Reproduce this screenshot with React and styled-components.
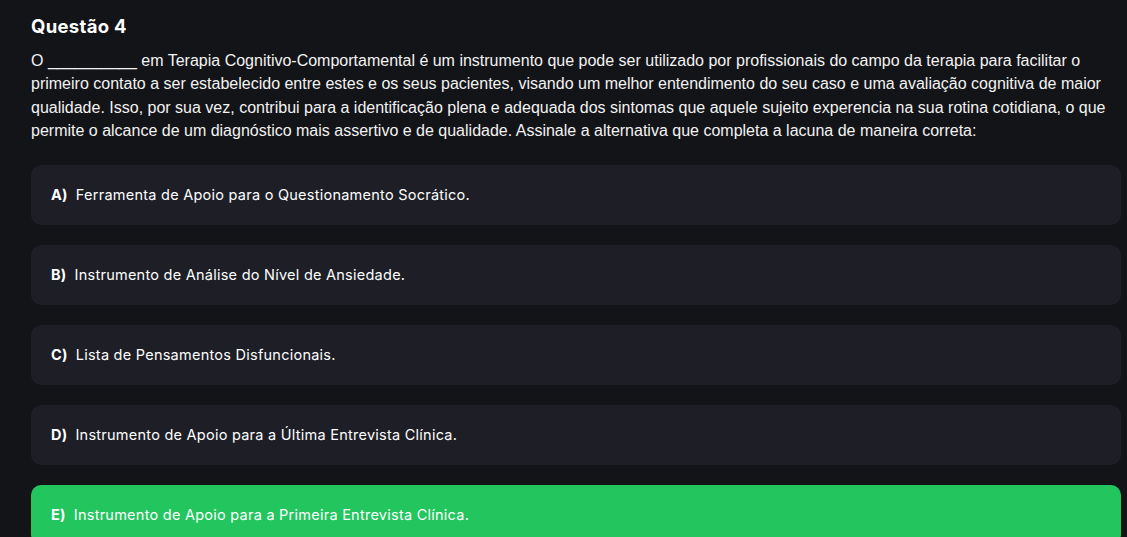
import styled, { createGlobalStyle } from "styled-components";

const GlobalStyle = createGlobalStyle`
  html, body {
    margin: 0;
    padding: 0;
    background: #131418;
  }
  * { box-sizing: border-box; }
`

const StyledPage = styled.main`
  min-height: 537px;
  padding: 14px 6px 0 31px;
  background-color: #131418;
  display: flex;
  flex-direction: column;
`

const StyledTitle = styled.h2`
  margin: 0;
  font-family: Inter, "Noto Sans", sans-serif;
  font-size: 18.5px;
  font-weight: 700;
  letter-spacing: 0.3px;
  line-height: 24px;
  color: #ffffff;
`

const StyledStatement = styled.p`
  margin: 11px 0 0;
  font-family: "Liberation Sans", Arial, sans-serif;
  font-size: 16px;
  line-height: 23.4px;
  color: #f2f2f2;
`

const StyledOptions = styled.ul`
  list-style: none;
  margin: 22px 0 0;
  padding: 0;
  display: flex;
  flex-direction: column;
  gap: 20px;
`

const StyledOption = styled.li`
  height: 60px;
  display: flex;
  align-items: center;
  gap: 8px;
  padding: 0 20px;
  border-radius: 10px;
  background-color: ${props => (props.$correct ? "#22c55e" : "#1d1e26")};
  font-family: Inter, "Noto Sans", sans-serif;
  font-size: 14.5px;
  letter-spacing: 0.25px;
  color: #ffffff;
`

const StyledLetter = styled.span`
  font-weight: 700;
`

const StyledOptionText = styled.span`
  font-weight: 400;
`

const options = [
  { letter: "A", text: "Ferramenta de Apoio para o Questionamento Socrático." },
  { letter: "B", text: "Instrumento de Análise do Nível de Ansiedade." },
  { letter: "C", text: "Lista de Pensamentos Disfuncionais." },
  { letter: "D", text: "Instrumento de Apoio para a Última Entrevista Clínica." },
  { letter: "E", text: "Instrumento de Apoio para a Primeira Entrevista Clínica.", correct: true },
];

const App = () => {
  return (
    <>
      <GlobalStyle />
      <StyledPage>
        <StyledTitle>Questão 4</StyledTitle>
        <StyledStatement>
          O __________ em Terapia Cognitivo-Comportamental é um instrumento que pode ser utilizado por
          profissionais do campo da terapia para facilitar o primeiro contato a ser estabelecido entre estes
          e os seus pacientes, visando um melhor entendimento do seu caso e uma avaliação cognitiva de maior
          qualidade. Isso, por sua vez, contribui para a identificação plena e adequada dos sintomas que
          aquele sujeito experencia na sua rotina cotidiana, o que permite o alcance de um diagnóstico mais
          assertivo e de qualidade. Assinale a alternativa que completa a lacuna de maneira correta:
        </StyledStatement>

        <StyledOptions>
          {options.map(option => (
            <StyledOption key={option.letter} $correct={option.correct}>
              <StyledLetter>{option.letter})</StyledLetter>
              <StyledOptionText>{option.text}</StyledOptionText>
            </StyledOption>
          ))}
        </StyledOptions>
      </StyledPage>
    </>
  );
};

export default App;
